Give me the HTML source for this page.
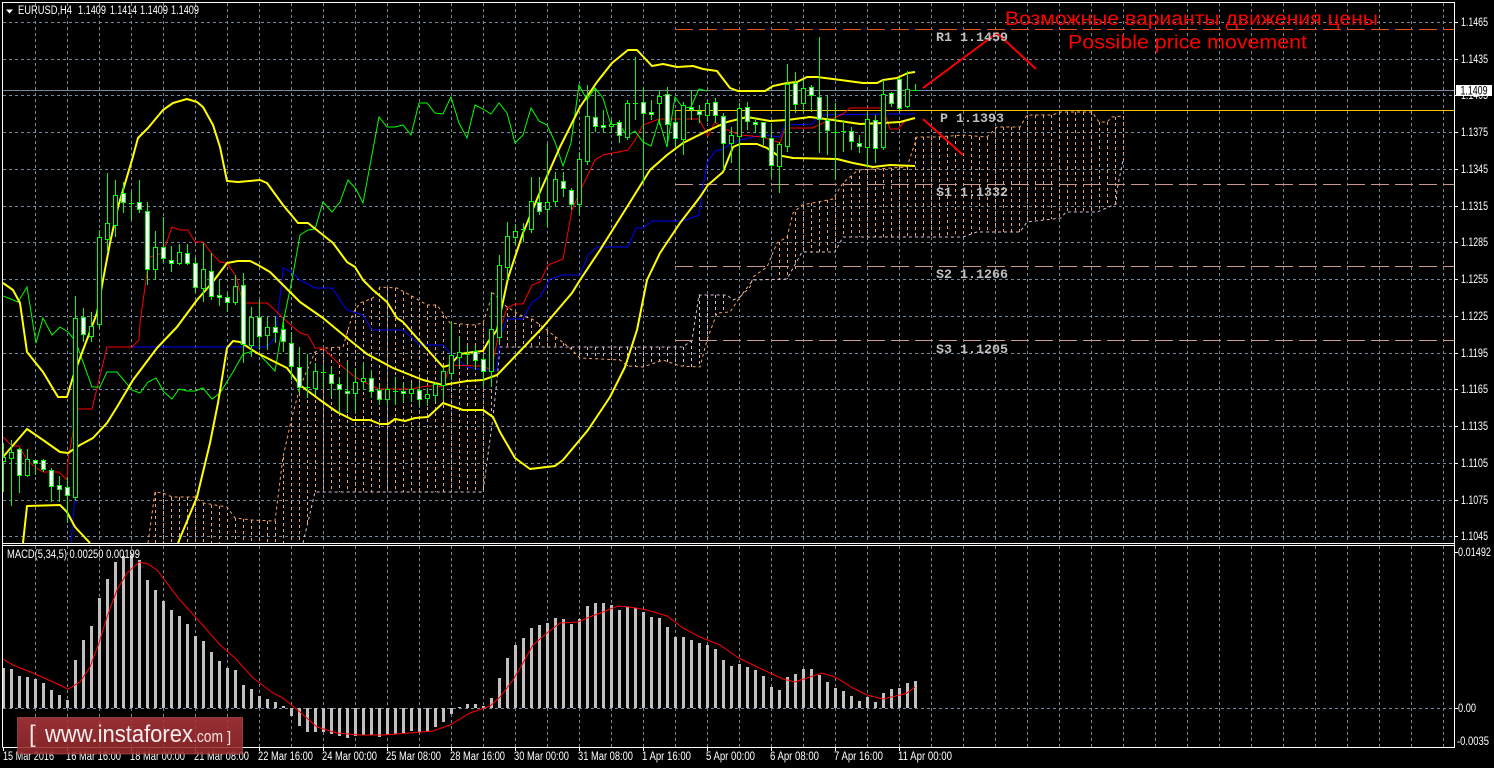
<!DOCTYPE html>
<html><head><meta charset="utf-8"><title>EURUSD H4</title>
<style>
html,body{margin:0;padding:0;background:#000;width:1494px;height:768px;overflow:hidden}
svg{display:block}
text{font-family:"Liberation Sans",sans-serif}
.a{fill:#fff;font-size:11.5px}
.l{fill:#c0c0c0;font-family:"Liberation Mono",monospace;font-size:13.33px;font-weight:bold}
</style></head><body>
<svg width="1494" height="768" viewBox="0 0 1494 768" xmlns="http://www.w3.org/2000/svg">
<defs>
<clipPath id="m"><rect x="3" y="3" width="1451" height="540"/></clipPath>
<clipPath id="c"><rect x="3" y="546" width="1451" height="201"/></clipPath>
<linearGradient id="wm" x1="0" y1="0" x2="0" y2="1"><stop offset="0" stop-color="#ac363b"/><stop offset="1" stop-color="#94292c"/></linearGradient>
</defs>

<!-- grid main -->
<g clip-path="url(#m)">
<path fill="none" stroke="#778899" stroke-dasharray="3 3" d="M3 22.5H1454M3 59.5H1454M3 95.5H1454M3 132.5H1454M3 169.5H1454M3 206.5H1454M3 242.5H1454M3 279.5H1454M3 316.5H1454M3 353.5H1454M3 389.5H1454M3 426.5H1454M3 463.5H1454M3 500.5H1454M3 536.5H1454
M35.5 3V543M67.5 3V543M99.5 3V543M131.5 3V543M163.5 3V543M195.5 3V543M227.5 3V543M259.5 3V543M291.5 3V543M323.5 3V543M355.5 3V543M387.5 3V543M419.5 3V543M451.5 3V543M483.5 3V543M515.5 3V543M547.5 3V543M579.5 3V543M611.5 3V543M643.5 3V543M675.5 3V543M707.5 3V543M739.5 3V543M771.5 3V543M803.5 3V543M835.5 3V543M867.5 3V543M899.5 3V543M931.5 3V543M963.5 3V543M995.5 3V543M1027.5 3V543M1059.5 3V543M1091.5 3V543M1123.5 3V543M1155.5 3V543M1187.5 3V543M1219.5 3V543M1251.5 3V543M1283.5 3V543M1315.5 3V543M1347.5 3V543M1379.5 3V543M1411.5 3V543M1443.5 3V543"/>
<path stroke="#778899" d="M3 90.5H1454"/>

<!-- kumo hatches -->
<path fill="none" stroke="#f4a460" stroke-dasharray="3 3" d="M155.5 492V543M163.5 493V543M171.5 497V543M179.5 497V543M187.5 497V543M195.5 497V543M203.5 503V543M211.5 505V543M219.5 506V543M227.5 507V543M235.5 518V543M243.5 519V543M251.5 520V543M259.5 520V543M267.5 521V543M275.5 521V543M283.5 457V543M291.5 417V543M299.5 387V543M307.5 370V525
M315.5 352V492M323.5 348V492M331.5 348V492M339.5 347V492M347.5 330V492M355.5 308V492M363.5 302V492M371.5 298V492M379.5 287V492M387.5 288V492M395.5 288V492M403.5 292V492M411.5 296V492M419.5 302V492M427.5 305V492M435.5 305V492M443.5 315V492M451.5 323V492M459.5 324V492M467.5 325V492M475.5 325V492M483.5 323V492M491.5 300V420
M499.5 305V347M507.5 307V347M515.5 313V347M523.5 317V347M531.5 319V347M539.5 324V347M547.5 331V347M555.5 337V347M563.5 343V347
M779.5 242V280M787.5 236V279M795.5 212V270M803.5 205V252M811.5 203V252M819.5 201V252M827.5 200V252M835.5 197V252M843.5 183V237M851.5 176V237M859.5 170V237M867.5 169V237M875.5 169V237M883.5 168V237M891.5 168V237M899.5 167V237M907.5 167V237M915.5 137V237M923.5 137V237M931.5 137V237M939.5 137V237M947.5 136V237M955.5 135V237M963.5 135V237M971.5 136V234M979.5 137V232M987.5 137V232M995.5 127V232M1003.5 127V232M1011.5 127V232M1019.5 127V232M1027.5 115V222M1035.5 115V221M1043.5 115V220M1051.5 115V219M1059.5 112V218M1067.5 112V212M1075.5 112V212M1083.5 112V212M1091.5 112V212M1099.5 122V210M1107.5 122V207M1115.5 117V204M1123.5 116V160"/>
<path fill="none" stroke="#d8bfd8" stroke-dasharray="3 3" d="M571.5 347V349M579.5 347V358M587.5 347V359M595.5 347V359M603.5 347V359M611.5 347V360M619.5 347V360M627.5 347V366M635.5 347V367M643.5 347V367M651.5 347V364M659.5 347V361M667.5 347V362M675.5 347V365M683.5 347V366M691.5 340V367M699.5 295V367M707.5 295V340M715.5 295V315M723.5 295V312"/>
<!-- kumo outlines -->
<path fill="none" stroke="#f4a460" stroke-dasharray="3 3" d="M148 543L155 492L163 493L172 497L195 497L203 503L227 507L235 518L252 520L275 521L283 457L292 417L300 387L315 352L325 348L343 347L353 313L360 303L373 298L380 287L397 288L410 295L427 305L437 305L450 323L473 325L483 323L493 293L507 307L520 315L532 319L543 327L570 348L580 358L620 360L627 366L643 367L663 360L680 366L700 367L707 340L717 313L730 312L740 297L750 287L753 277L767 267L777 243L787 237L793 213L802 205L833 199L843 183L858 170L907 167L917 137L937 137L963 135L987 137L997 127L1020 127L1027 115L1052 115L1061 112L1092 112L1099 122L1107 122L1112 117L1123 116"/>
<path fill="none" stroke="#d8bfd8" stroke-dasharray="3 3" d="M303 543L315 492L483 492L493 417L497 380L500 347L683 347L692 340L699 295L727 295L733 300L740 297L753 280L787 279L802 252L835 252L843 237L963 237L977 232L1020 232L1027 222L1061 218L1066 212L1097 212L1116 204L1117 190L1123 160"/>

<!-- levels -->
<path stroke="#e2501e" stroke-dasharray="18 6" d="M675 29.5H1454"/>
<path stroke="#c8968a" stroke-dasharray="18 6" d="M675 184.5H1454M675 266.5H1454M675 340.5H1454"/>
<path stroke="#ffc400" d="M675 110.5H1454"/>

<!-- blue kijun -->
<path fill="none" stroke="#0000ff" d="M71 543L77 472L78 409L92 409L107 347L267 347L275 338L282 280L283 268L292 272L300 280L315 288L332 288L347 310L363 315L372 330L403 330L420 345L443 345L452 355L467 367L483 370L497 370L500 337L507 319L523 319L532 302L540 297L550 279L563 275L580 275L588 255L597 247L628 247L636 228L643 228L652 221L683 221L699 215L703 187L707 163L715 151L723 149L732 143L740 140L763 135L780 137L785 125L812 124L820 115L883 114L915 114"/>
<!-- red tenkan -->
<path fill="none" stroke="#ff0000" d="M3 437L12 446L19 446L27 460L35 467L43 472L59 472L67 480L68 460L73 432L78 409L92 409L107 347L132 347L139 340L140 323L146 280L147 272L150 257L163 253L172 227L180 230L188 230L195 242L203 242L212 254L220 262L227 263L235 275L237 280L243 303L267 303L275 310L283 318L300 333L308 335L315 348L323 348L337 362L355 377L370 385L379 389L411 389L427 386L435 386L443 387L450 365L475 366L483 366L491 370L499 333L507 308L515 304L523 304L532 285L540 282L548 265L563 259L572 210L582 187L595 160L603 155L628 150L635 140L643 125L659 119L699 119L708 136L715 122L723 128L740 135L763 137L780 143L785 128L812 128L843 114L850 108L883 108L890 129L898 129L905 121L915 118"/>
<!-- green chikou -->
<path fill="none" stroke="#00ff00" d="M3 296L18 302L27 287L36 343L43 318L52 335L60 327L68 332L73 338L78 348L92 387L100 387L107 372L117 372L132 390L140 393L148 382L156 378L164 392L172 399L179 389L187 391L195 391L203 388L212 399L220 393L233 372L243 354L253 351L260 355L275 371L283 323L292 280L300 235L308 230L315 229L323 202L332 212L340 202L348 180L356 189L363 203L379 117L387 127L395 127L403 125L411 135L419 103L427 103L435 113L443 114L451 97L459 123L467 138L475 105L483 109L491 114L499 103L507 113L515 143L523 135L531 108L539 121L547 125L555 142L563 166L571 143L579 85L587 100L595 88L603 98L611 125L619 124L627 136L635 131L643 142L651 146L659 120L667 147L675 97L683 108L691 107L699 89L707 91"/>
<!-- bollinger -->
<g fill="none" stroke="#ffff00" stroke-width="2" stroke-linejoin="round">
<path d="M3 283L13 290L20 303L27 352L43 372L58 397L67 397L73 377L80 358L97 313L103 280L110 243L118 207L132 160L138 138L148 128L163 110L173 103L187 99L197 102L203 107L213 125L220 147L227 181L238 182L260 180L267 183L283 205L298 223L308 223L333 243L347 262L355 267L363 280L373 290L387 302L397 318L403 322L417 338L443 367L450 365L460 354L473 352L483 351L488 342L497 330L508 278L523 233L540 192L560 147L580 107L597 82L612 63L628 50L637 50L652 66L663 64L677 67L693 66L703 69L717 71L730 88L738 91L765 91L773 86L787 83L797 82L807 77L817 77L833 79L863 83L877 83L883 80L897 78L908 73L915 72"/>
<path d="M3 457L27 429L43 440L60 452L68 453L80 445L93 438L107 423L117 407L133 380L157 348L177 327L197 300L212 283L227 263L238 261L250 261L258 265L270 272L278 280L300 302L323 318L347 338L367 354L393 368L423 380L443 385L467 381L483 380L497 375L500 372L523 348L543 327L572 293L580 280L600 250L627 207L650 170L667 155L683 143L707 131L727 122L747 117L770 121L787 120L810 117L833 120L860 124L883 123L900 122L915 118"/>
<path d="M23 543L27 506L60 505L67 512L75 527L90 543"/>
<path d="M178 543L197 497L210 443L218 403L227 348L233 341L240 342L257 353L267 358L287 368L300 385L320 400L337 412L353 420L370 420L380 424L388 424L395 419L405 421L415 418L428 417L443 403L463 410L483 410L493 417L500 432L515 458L530 469L555 466L563 460L588 430L610 397L625 367L637 330L647 280L660 253L680 223L700 197L708 185L723 172L733 147L740 144L757 144L767 148L777 155L793 158L837 159L853 163L873 167L890 165L915 166"/>
</g>

<!-- candles -->
<path stroke="#00ff00" fill="none" d="M3.5 443V492M11.5 440V506M19.5 448V493M27.5 449V477M35.5 460V475M43.5 459V472M51.5 468V502M59.5 476V502M67.5 477V523M75.5 296V500M83.5 308V342M91.5 312V342M99.5 230V328M107.5 173V253M115.5 180V237M123.5 182V213M131.5 192V220M139.5 180V213M147.5 202V285M155.5 231V280M163.5 217V263M171.5 246V272M179.5 244V265M187.5 244V265M195.5 258V293M203.5 243V302M211.5 253V300M219.5 280V306M227.5 292V312M235.5 275V305M243.5 273V363M251.5 307V357M259.5 300V350M267.5 317V350M275.5 317V343M283.5 317V352M291.5 332V380M299.5 347V393M307.5 354V398M315.5 363V395M323.5 365V388M331.5 367V397M339.5 377V413M347.5 362V413M355.5 368V412M363.5 363V390M371.5 370V398M379.5 385V405M387.5 385V405M395.5 377V405M403.5 383V402M411.5 383V402M419.5 383V406M427.5 388V406M435.5 382V402M443.5 367V400M451.5 322V380M459.5 337V367M467.5 345V365M475.5 345V370M483.5 354V387M491.5 292V387M499.5 255V345M507.5 222V280M515.5 224V245M523.5 223V242M531.5 177V233M539.5 177V215M547.5 144V227M555.5 172V207M563.5 172V197M571.5 188V210M579.5 152V215M587.5 85V165M595.5 88V132M603.5 110V133M611.5 120V133M619.5 120V143M627.5 100V140M635.5 57V120M643.5 87V183M651.5 100V120M659.5 90V125M667.5 87V143M675.5 110V147M683.5 102V155M691.5 90V120M699.5 105V123M707.5 100V122M715.5 98V123M723.5 113V170M731.5 127V163M739.5 103V183M747.5 102V130M755.5 117V133M763.5 122V145M771.5 123V177M779.5 142V193M787.5 64V152M795.5 72V113M803.5 80V112M811.5 85V112M819.5 37V153M827.5 96V155M835.5 103V180M843.5 120V152M851.5 127V150M859.5 135V153M867.5 112V167M875.5 115V163M883.5 80V150M891.5 92V107M899.5 78V110M907.5 71V108M915.5 84V91
M33 460.5h5M129 203.5h5M305 387.5h5M321 372.5h5M393 391.5h5M465 354.5h5M521 229.5h5M633 103.5h5M833 132.5h5M841 131.5h5M913 90.5h5"/>
<path stroke="#00ff00" fill="#000" d="M1.5 457.5h4v4h-4zM9.5 452.5h4v6h-4zM25.5 459.5h4v16h-4zM73.5 318.5h4v179h-4zM89.5 326.5h4v10h-4zM97.5 237.5h4v87h-4zM105.5 223.5h4v16h-4zM113.5 195.5h4v30h-4zM153.5 247.5h4v22h-4zM177.5 252.5h4v11h-4zM201.5 269.5h4v19h-4zM233.5 286.5h4v16h-4zM249.5 317.5h4v28h-4zM265.5 327.5h4v8h-4zM313.5 371.5h4v17h-4zM353.5 382.5h4v11h-4zM361.5 378.5h4v3h-4zM385.5 389.5h4v10h-4zM409.5 389.5h4v4h-4zM425.5 394.5h4v4h-4zM433.5 384.5h4v11h-4zM441.5 371.5h4v14h-4zM449.5 355.5h4v18h-4zM457.5 352.5h4v5h-4zM489.5 329.5h4v42h-4zM497.5 265.5h4v72h-4z
M505.5 236.5h4v31h-4zM513.5 231.5h4v6h-4zM529.5 201.5h4v28h-4zM545.5 202.5h4v7h-4zM553.5 179.5h4v22h-4zM577.5 159.5h4v45h-4zM585.5 116.5h4v45h-4zM609.5 124.5h4v2h-4zM625.5 103.5h4v34h-4zM657.5 96.5h4v7h-4zM681.5 105.5h4v34h-4zM705.5 103.5h4v12h-4zM729.5 135.5h4v8h-4zM737.5 108.5h4v28h-4zM777.5 144.5h4v22h-4zM785.5 84.5h4v62h-4zM801.5 88.5h4v15h-4zM865.5 119.5h4v28h-4zM881.5 94.5h4v53h-4zM905.5 89.5h4v17h-4z"/>
<path stroke="#00ff00" fill="#fff" d="M17.5 449.5h4v26h-4zM33.5 460.5h4v3h-4zM41.5 460.5h4v9h-4zM49.5 470.5h4v16h-4zM57.5 485.5h4v4h-4zM65.5 487.5h4v8h-4zM81.5 317.5h4v17h-4zM121.5 193.5h4v9h-4zM137.5 202.5h4v7h-4zM145.5 211.5h4v58h-4zM161.5 247.5h4v11h-4zM169.5 260.5h4v3h-4zM185.5 253.5h4v10h-4zM193.5 263.5h4v24h-4zM209.5 271.5h4v25h-4zM217.5 295.5h4v2h-4zM225.5 297.5h4v5h-4zM241.5 285.5h4v59h-4zM257.5 317.5h4v19h-4zM273.5 327.5h4v5h-4zM281.5 329.5h4v12h-4zM289.5 343.5h4v23h-4zM297.5 367.5h4v20h-4zM329.5 374.5h4v9h-4zM337.5 384.5h4v5h-4zM345.5 391.5h4v2h-4zM369.5 378.5h4v13h-4zM377.5 390.5h4v9h-4zM401.5 391.5h4v2h-4zM417.5 390.5h4v9h-4zM473.5 351.5h4v9h-4zM481.5 359.5h4v12h-4z
M537.5 202.5h4v9h-4zM561.5 181.5h4v7h-4zM569.5 190.5h4v14h-4zM593.5 117.5h4v9h-4zM601.5 125.5h4v2h-4zM617.5 122.5h4v13h-4zM641.5 102.5h4v11h-4zM649.5 112.5h4v2h-4zM665.5 94.5h4v30h-4zM673.5 122.5h4v16h-4zM689.5 107.5h4v2h-4zM697.5 111.5h4v3h-4zM713.5 102.5h4v13h-4zM721.5 116.5h4v27h-4zM745.5 107.5h4v14h-4zM753.5 122.5h4v2h-4zM761.5 122.5h4v15h-4zM769.5 138.5h4v27h-4zM793.5 83.5h4v21h-4zM809.5 87.5h4v8h-4zM817.5 97.5h4v22h-4zM825.5 120.5h4v10h-4zM849.5 131.5h4v10h-4zM857.5 143.5h4v3h-4zM873.5 120.5h4v28h-4zM889.5 93.5h4v10h-4zM897.5 79.5h4v29h-4z"/>

<!-- arrows -->
<path fill="none" stroke="#ff0000" stroke-width="2" d="M923 88L997 33L1036 69M923 119L963 155"/>
</g>

<!-- level labels -->
<text class="l" x="936" y="41">R1 1.1459</text>
<text class="l" x="940" y="122">P 1.1393</text>
<text class="l" x="936" y="196">S1 1.1332</text>
<text class="l" x="936" y="278">S2 1.1266</text>
<text class="l" x="936" y="353">S3 1.1205</text>

<!-- heading text -->
<text x="1005" y="25" fill="#ff0000" font-size="19.5" textLength="373" lengthAdjust="spacingAndGlyphs">Возможные варианты движения цены</text>
<text x="1068" y="48.5" fill="#ff0000" font-size="19.5" textLength="239" lengthAdjust="spacingAndGlyphs">Possible price movement</text>

<!-- top legend -->
<path fill="#fff" d="M6 9.5h7l-3.5 4z"/>
<text class="a" x="18" y="14" textLength="54" lengthAdjust="spacingAndGlyphs">EURUSD,H4</text>
<text class="a" x="78" y="14" textLength="28" lengthAdjust="spacingAndGlyphs">1.1409</text>
<text class="a" x="110" y="14" textLength="27" lengthAdjust="spacingAndGlyphs">1.1414</text>
<text class="a" x="140" y="14" textLength="28" lengthAdjust="spacingAndGlyphs">1.1409</text>
<text class="a" x="171" y="14" textLength="28" lengthAdjust="spacingAndGlyphs">1.1409</text>

<!-- MACD panel -->
<g clip-path="url(#c)">
<path fill="none" stroke="#778899" stroke-dasharray="3 3" d="M3 708.5H1454M35.5 546V747M67.5 546V747M99.5 546V747M131.5 546V747M163.5 546V747M195.5 546V747M227.5 546V747M259.5 546V747M291.5 546V747M323.5 546V747M355.5 546V747M387.5 546V747M419.5 546V747M451.5 546V747M483.5 546V747M515.5 546V747M547.5 546V747M579.5 546V747M611.5 546V747M643.5 546V747M675.5 546V747M707.5 546V747M739.5 546V747M771.5 546V747M803.5 546V747M835.5 546V747M867.5 546V747M899.5 546V747M931.5 546V747M963.5 546V747M995.5 546V747M1027.5 546V747M1059.5 546V747M1091.5 546V747M1123.5 546V747M1155.5 546V747M1187.5 546V747M1219.5 546V747M1251.5 546V747M1283.5 546V747M1315.5 546V747M1347.5 546V747M1379.5 546V747M1411.5 546V747M1443.5 546V747"/>
<path fill="none" stroke="#c0c0c0" stroke-width="3" d="M3.5 708V668M11.5 708V669M19.5 708V676M27.5 708V677M35.5 708V679M43.5 708V683M51.5 708V690M59.5 708V695M67.5 708V700M75.5 708V660M83.5 708V640M91.5 708V626M99.5 708V598M107.5 708V579M115.5 708V562M123.5 708V556M131.5 708V555M139.5 708V560M147.5 708V580M155.5 708V590M163.5 708V601M171.5 708V610M179.5 708V616M187.5 708V624M195.5 708V636M203.5 708V641M211.5 708V652M219.5 708V661M227.5 708V668M235.5 708V670M243.5 708V685M251.5 708V689M259.5 708V696M267.5 708V699M275.5 708V702M283.5 708V706M291.5 708V716M299.5 708V726M307.5 708V732M315.5 708V732M323.5 708V732M331.5 708V734M339.5 708V736M347.5 708V738M355.5 708V736M363.5 708V735M371.5 708V735M379.5 708V737M387.5 708V735M395.5 708V734M403.5 708V733M411.5 708V731M419.5 708V732M427.5 708V731M435.5 708V727M443.5 708V722M451.5 708V714M459.5 708V707M467.5 708V704M475.5 708V704M483.5 708V706M491.5 708V698M499.5 708V678M507.5 708V658M515.5 708V645M523.5 708V638M531.5 708V628M539.5 708V625M547.5 708V623M555.5 708V618M563.5 708V619M571.5 708V624M579.5 708V619M587.5 708V606M595.5 708V603M603.5 708V603M611.5 708V605M619.5 708V610M627.5 708V607M635.5 708V608M643.5 708V612M651.5 708V617M659.5 708V618M667.5 708V627M675.5 708V637M683.5 708V637M691.5 708V640M699.5 708V643M707.5 708V645M715.5 708V649M723.5 708V660M731.5 708V666M739.5 708V664M747.5 708V667M755.5 708V670M763.5 708V676M771.5 708V687M779.5 708V690M787.5 708V677M795.5 708V674M803.5 708V669M811.5 708V669M819.5 708V675M827.5 708V682M835.5 708V688M843.5 708V691M851.5 708V696M859.5 708V701M867.5 708V697M875.5 708V702M883.5 708V693M891.5 708V689M899.5 708V688M907.5 708V683M915.5 708V681"/>
<path fill="none" stroke="#ff0000" d="M3 659L13 665L33 673L53 682L68 689L80 682L90 667L99 643L107 617L117 590L127 573L139 562L148 564L157 570L163 578L180 600L200 622L220 645L235 658L253 678L273 693L283 698L300 712L317 727L337 733L360 735L383 735L410 733L433 731L450 725L470 713L490 706L500 697L513 680L523 663L533 645L547 633L560 623L578 622L587 618L603 612L618 606L630 607L647 610L667 616L683 628L700 637L720 645L737 657L753 665L770 673L783 679L795 682L810 677L822 673L835 677L853 688L867 695L883 699L900 695L907 693L915 687"/>
</g>
<text class="a" x="7" y="558" textLength="133" lengthAdjust="spacingAndGlyphs">MACD(5,34,5) 0.00250 0.00199</text>

<!-- frame -->
<path fill="none" stroke="#fff" d="M2.5 747.5V2.5H1454.5V747.5H2.5M2.5 543.5H1454.5M2.5 545.5H1454.5"/>
<!-- y ticks -->
<path stroke="#fff" d="M1455 22.5h3M1455 59.5h3M1455 95.5h3M1455 132.5h3M1455 169.5h3M1455 206.5h3M1455 242.5h3M1455 279.5h3M1455 316.5h3M1455 353.5h3M1455 389.5h3M1455 426.5h3M1455 463.5h3M1455 500.5h3M1455 536.5h3M1455 552.5h3M1455 708.5h3
M3.5 748v3M67.5 748v3M131.5 748v3M195.5 748v3M259.5 748v3M323.5 748v3M387.5 748v3M451.5 748v3M515.5 748v3M579.5 748v3M643.5 748v3M707.5 748v3M771.5 748v3M835.5 748v3M899.5 748v3"/>
<!-- y labels -->
<text class="a" x="1461" y="26" textLength="27" lengthAdjust="spacingAndGlyphs">1.1465</text>
<text class="a" x="1461" y="63" textLength="27" lengthAdjust="spacingAndGlyphs">1.1435</text>
<text class="a" x="1461" y="99" textLength="27" lengthAdjust="spacingAndGlyphs">1.1405</text>
<text class="a" x="1461" y="136" textLength="27" lengthAdjust="spacingAndGlyphs">1.1375</text>
<text class="a" x="1461" y="173" textLength="27" lengthAdjust="spacingAndGlyphs">1.1345</text>
<text class="a" x="1461" y="210" textLength="27" lengthAdjust="spacingAndGlyphs">1.1315</text>
<text class="a" x="1461" y="246" textLength="27" lengthAdjust="spacingAndGlyphs">1.1285</text>
<text class="a" x="1461" y="283" textLength="27" lengthAdjust="spacingAndGlyphs">1.1255</text>
<text class="a" x="1461" y="320" textLength="27" lengthAdjust="spacingAndGlyphs">1.1225</text>
<text class="a" x="1461" y="357" textLength="27" lengthAdjust="spacingAndGlyphs">1.1195</text>
<text class="a" x="1461" y="393" textLength="27" lengthAdjust="spacingAndGlyphs">1.1165</text>
<text class="a" x="1461" y="430" textLength="27" lengthAdjust="spacingAndGlyphs">1.1135</text>
<text class="a" x="1461" y="467" textLength="27" lengthAdjust="spacingAndGlyphs">1.1105</text>
<text class="a" x="1461" y="504" textLength="27" lengthAdjust="spacingAndGlyphs">1.1075</text>
<text class="a" x="1461" y="540" textLength="27" lengthAdjust="spacingAndGlyphs">1.1045</text>
<text class="a" x="1458" y="556" textLength="33" lengthAdjust="spacingAndGlyphs">0.01492</text>
<text class="a" x="1458" y="712" textLength="18" lengthAdjust="spacingAndGlyphs">0.00</text>
<text class="a" x="1457" y="745" textLength="32" lengthAdjust="spacingAndGlyphs">-0.0035</text>
<rect x="1456" y="85" width="36" height="11" fill="#fff"/>
<text x="1460.5" y="94.5" fill="#000" font-size="11.5" textLength="27" lengthAdjust="spacingAndGlyphs">1.1409</text>

<!-- x labels -->
<text class="a" x="3" y="760" textLength="51" lengthAdjust="spacingAndGlyphs">15 Mar 2016</text>
<text class="a" x="66" y="760" textLength="55" lengthAdjust="spacingAndGlyphs">16 Mar 16:00</text>
<text class="a" x="130" y="760" textLength="55" lengthAdjust="spacingAndGlyphs">18 Mar 00:00</text>
<text class="a" x="194" y="760" textLength="55" lengthAdjust="spacingAndGlyphs">21 Mar 08:00</text>
<text class="a" x="258" y="760" textLength="55" lengthAdjust="spacingAndGlyphs">22 Mar 16:00</text>
<text class="a" x="322" y="760" textLength="55" lengthAdjust="spacingAndGlyphs">24 Mar 00:00</text>
<text class="a" x="386" y="760" textLength="55" lengthAdjust="spacingAndGlyphs">25 Mar 08:00</text>
<text class="a" x="450" y="760" textLength="55" lengthAdjust="spacingAndGlyphs">28 Mar 16:00</text>
<text class="a" x="514" y="760" textLength="55" lengthAdjust="spacingAndGlyphs">30 Mar 00:00</text>
<text class="a" x="578" y="760" textLength="55" lengthAdjust="spacingAndGlyphs">31 Mar 08:00</text>
<text class="a" x="642" y="760" textLength="49" lengthAdjust="spacingAndGlyphs">1 Apr 16:00</text>
<text class="a" x="706" y="760" textLength="49" lengthAdjust="spacingAndGlyphs">5 Apr 00:00</text>
<text class="a" x="770" y="760" textLength="49" lengthAdjust="spacingAndGlyphs">6 Apr 08:00</text>
<text class="a" x="834" y="760" textLength="49" lengthAdjust="spacingAndGlyphs">7 Apr 16:00</text>
<text class="a" x="898" y="760" textLength="54" lengthAdjust="spacingAndGlyphs">11 Apr 00:00</text>

<!-- watermark -->
<rect x="17.5" y="717.5" width="225" height="36.5" fill="url(#wm)" fill-opacity=".88" stroke="#bb5a5c" stroke-opacity=".6"/>
<text x="29" y="742" fill="#f3e3e3" font-size="24">[</text>
<text x="45" y="742" fill="#f8eeee" font-size="24" textLength="148" lengthAdjust="spacingAndGlyphs">www.instaforex</text>
<text x="193" y="742" fill="#f3e3e3" font-size="17" textLength="30" lengthAdjust="spacingAndGlyphs">.com</text>
<text x="227" y="742" fill="#f3e3e3" font-size="15">]</text>
</svg>
</body></html>
